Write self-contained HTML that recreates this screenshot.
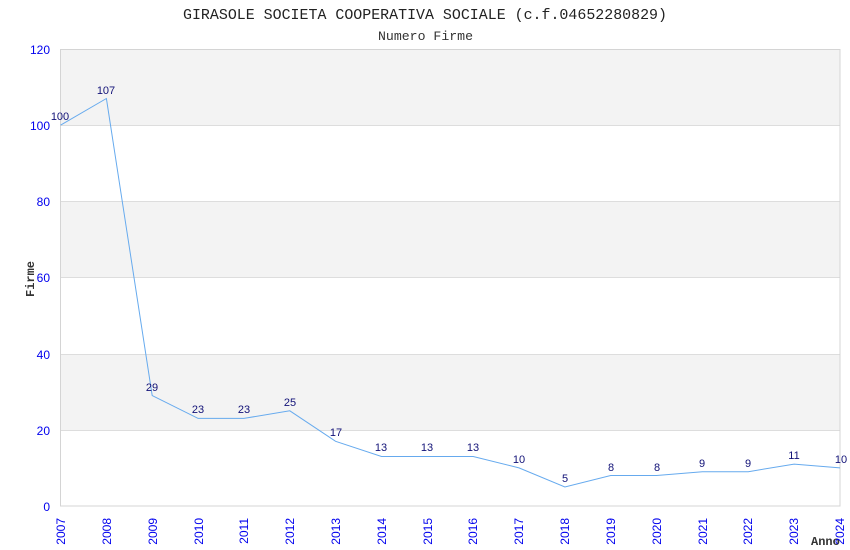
<!DOCTYPE html>
<html><head><meta charset="utf-8"><style>html,body{margin:0;padding:0;background:#fff}svg{display:block}</style></head>
<body>
<svg width="850" height="550" xmlns="http://www.w3.org/2000/svg">
<rect x="0" y="0" width="850" height="550" fill="#fff"/>
<text x="183" y="19" textLength="484" lengthAdjust="spacingAndGlyphs" font-family="Liberation Mono, monospace" font-size="15" fill="#222">GIRASOLE SOCIETA COOPERATIVA SOCIALE (c.f.04652280829)</text>
<text x="378" y="40" textLength="95" lengthAdjust="spacingAndGlyphs" font-family="Liberation Mono, monospace" font-size="13" fill="#333">Numero Firme</text>
<rect x="60.5" y="49" width="779.5" height="76" fill="#f3f3f3"/>
<rect x="60.5" y="202" width="779.5" height="76" fill="#f3f3f3"/>
<rect x="60.5" y="354" width="779.5" height="76" fill="#f3f3f3"/>
<g stroke="#ddd" stroke-width="1">
<line x1="60.5" y1="125.5" x2="840" y2="125.5"/>
<line x1="60.5" y1="201.5" x2="840" y2="201.5"/>
<line x1="60.5" y1="277.5" x2="840" y2="277.5"/>
<line x1="60.5" y1="354.5" x2="840" y2="354.5"/>
<line x1="60.5" y1="430.5" x2="840" y2="430.5"/>
</g>
<rect x="60.5" y="49.5" width="779.5" height="456.5" fill="none" stroke="#d4d4d4"/>
<g font-family="Liberation Sans, sans-serif" font-size="12" fill="#0000ee" text-anchor="end">
<text x="50" y="54">120</text><text x="50" y="130">100</text><text x="50" y="206">80</text><text x="50" y="282">60</text><text x="50" y="359">40</text><text x="50" y="435">20</text><text x="50" y="511">0</text>
</g>
<text transform="translate(34,279) rotate(-90)" text-anchor="middle" font-family="Liberation Mono, monospace" font-weight="bold" font-size="12" fill="#333">Firme</text>
<text x="811" y="545" font-family="Liberation Mono, monospace" font-weight="bold" font-size="12" fill="#333">Anno</text>
<g font-family="Liberation Sans, sans-serif" font-size="12" fill="#0000ee" text-anchor="end">
<text transform="translate(65,518) rotate(-90)">2007</text>
<text transform="translate(111,518) rotate(-90)">2008</text>
<text transform="translate(157,518) rotate(-90)">2009</text>
<text transform="translate(203,518) rotate(-90)">2010</text>
<text transform="translate(248,518) rotate(-90)">2011</text>
<text transform="translate(294,518) rotate(-90)">2012</text>
<text transform="translate(340,518) rotate(-90)">2013</text>
<text transform="translate(386,518) rotate(-90)">2014</text>
<text transform="translate(432,518) rotate(-90)">2015</text>
<text transform="translate(477,518) rotate(-90)">2016</text>
<text transform="translate(523,518) rotate(-90)">2017</text>
<text transform="translate(569,518) rotate(-90)">2018</text>
<text transform="translate(615,518) rotate(-90)">2019</text>
<text transform="translate(661,518) rotate(-90)">2020</text>
<text transform="translate(707,518) rotate(-90)">2021</text>
<text transform="translate(752,518) rotate(-90)">2022</text>
<text transform="translate(798,518) rotate(-90)">2023</text>
<text transform="translate(844,518) rotate(-90)">2024</text>
</g>
<polyline fill="none" stroke="#66aaee" stroke-width="1" points="60.5,125.2 106.4,98.5 152.2,395.6 198.1,418.4 243.9,418.4 289.8,410.8 335.6,441.3 381.5,456.5 427.3,456.5 473.2,456.5 519,467.9 564.9,487 610.7,475.5 656.6,475.5 702.4,471.7 748.3,471.7 794.1,464.1 840,467.9"/>
<g font-family="Liberation Sans, sans-serif" font-size="11" fill="#111177" text-anchor="middle">
<text x="60" y="120">100</text><text x="106" y="94">107</text><text x="152" y="391">29</text><text x="198" y="413">23</text><text x="244" y="413">23</text><text x="290" y="406">25</text><text x="336" y="436">17</text><text x="381" y="451">13</text><text x="427" y="451">13</text><text x="473" y="451">13</text><text x="519" y="463">10</text><text x="565" y="482">5</text><text x="611" y="471">8</text><text x="657" y="471">8</text><text x="702" y="467">9</text><text x="748" y="467">9</text><text x="794" y="459">11</text><text x="841" y="463">10</text>
</g>
</svg>
</body></html>
